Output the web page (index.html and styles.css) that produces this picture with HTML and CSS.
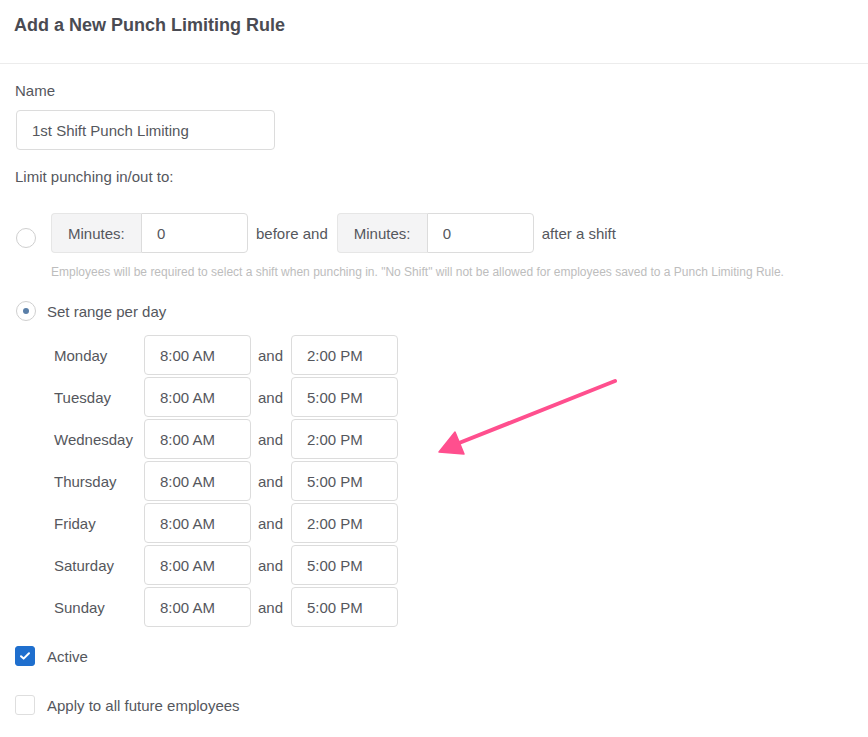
FILE: index.html
```html
<!DOCTYPE html>
<html lang="en">
<head>
    <meta charset="UTF-8">
    <meta name="viewport" content="width=device-width, initial-scale=1.0">
    <title>Add a New Punch Limiting Rule</title>
    <link rel="stylesheet" href="styles.css">
</head>
<body>

    <div class="header">
        <h1>Add a New Punch Limiting Rule</h1>
    </div>

    <div class="form">
        <div class="field-label">Name</div>
        <input type="text" class="name-input" value="1st Shift Punch Limiting" />

        <div class="field-label limit-label">Limit punching in/out to:</div>

        <div class="option-row">
            <span class="radio shift-radio"></span>
            <div class="addon-group">
                <span class="addon">Minutes:</span>
                <input type="text" class="addon-input" value="0" />
            </div>
            <span class="between">before and</span>
            <div class="addon-group">
                <span class="addon">Minutes:</span>
                <input type="text" class="addon-input" value="0" />
            </div>
            <span class="between">after a shift</span>
        </div>
        <div class="helper">Employees will be required to select a shift when punching in. "No Shift" will not be allowed for employees saved to a Punch Limiting Rule.</div>

        <div class="range-row">
            <span class="radio checked"></span>
            <span>Set range per day</span>
        </div>

        <div class="days">
            <div class="day-row">
                <span class="day-name">Monday</span>
                <input type="text" class="time-input" value="8:00 AM" />
                <span class="and">and</span>
                <input type="text" class="time-input" value="2:00 PM" />
            </div>
            <div class="day-row">
                <span class="day-name">Tuesday</span>
                <input type="text" class="time-input" value="8:00 AM" />
                <span class="and">and</span>
                <input type="text" class="time-input" value="5:00 PM" />
            </div>
            <div class="day-row">
                <span class="day-name">Wednesday</span>
                <input type="text" class="time-input" value="8:00 AM" />
                <span class="and">and</span>
                <input type="text" class="time-input" value="2:00 PM" />
            </div>
            <div class="day-row">
                <span class="day-name">Thursday</span>
                <input type="text" class="time-input" value="8:00 AM" />
                <span class="and">and</span>
                <input type="text" class="time-input" value="5:00 PM" />
            </div>
            <div class="day-row">
                <span class="day-name">Friday</span>
                <input type="text" class="time-input" value="8:00 AM" />
                <span class="and">and</span>
                <input type="text" class="time-input" value="2:00 PM" />
            </div>
            <div class="day-row">
                <span class="day-name">Saturday</span>
                <input type="text" class="time-input" value="8:00 AM" />
                <span class="and">and</span>
                <input type="text" class="time-input" value="5:00 PM" />
            </div>
            <div class="day-row">
                <span class="day-name">Sunday</span>
                <input type="text" class="time-input" value="8:00 AM" />
                <span class="and">and</span>
                <input type="text" class="time-input" value="5:00 PM" />
            </div>
        </div>

        <div class="check-row active-row">
            <span class="checkbox checked">
                <svg width="12" height="10" viewBox="0 0 12 10"><path d="M2 5.2 L4.6 7.6 L10 2.2" fill="none" stroke="#fff" stroke-width="2" stroke-linecap="round" stroke-linejoin="round"/></svg>
            </span>
            <span>Active</span>
        </div>
        <div class="check-row future-row">
            <span class="checkbox"></span>
            <span>Apply to all future employees</span>
        </div>
    </div>

    <!-- annotation arrow over the form -->
    <svg class="arrow" width="868" height="737" viewBox="0 0 868 737">
        <line x1="615" y1="381" x2="454" y2="445" stroke="#ff4f8e" stroke-width="4" stroke-linecap="round"/>
        <polygon points="439,452 455,432 464,454" fill="#ff4f8e" stroke="#ff4f8e" stroke-width="1.5" stroke-linejoin="round"/>
    </svg>

</body>
</html>
```

FILE: styles.css
```css
body {
    margin: 0;
    font-family: "Liberation Sans", Arial, sans-serif;
    font-size: 15px;
    color: #55575d;
    background-color: #fff;
    position: relative;
}

.header {
    height: 63px;
    border-bottom: 1px solid #ececec;
    padding: 0 14px;
}

h1 {
    margin: 0;
    padding-top: 13px;
    font-size: 18px;
    line-height: 24px;
    font-weight: bold;
    color: #4a4b53;
}

.form {
    padding: 0 15px;
}

.field-label {
    margin-top: 18px;
    line-height: 18px;
}

.limit-label {
    margin-top: 18px;
}

input {
    font-family: inherit;
    font-size: 15px;
    color: #55575d;
    box-sizing: border-box;
    border: 1px solid #dcdcdc;
    border-radius: 4px;
    outline: none;
    background: #fff;
}

.name-input {
    display: block;
    margin: 10px 0 0 1px;
    width: 259px;
    height: 40px;
    padding: 0 15px;
}

.option-row {
    display: flex;
    align-items: center;
    margin-top: 27px;
    height: 40px;
}

.radio {
    width: 20px;
    height: 20px;
    box-sizing: border-box;
    border: 1px solid #cfcfcf;
    border-radius: 50%;
    background: #fff;
    flex-shrink: 0;
    position: relative;
}

.shift-radio {
    margin: 10px 15px 0 1px;
}

.radio.checked::after {
    content: "";
    position: absolute;
    left: 6px;
    top: 6px;
    width: 6px;
    height: 6px;
    border-radius: 50%;
    background: #5a7fa8;
}

.addon-group {
    display: flex;
    height: 40px;
}

.addon {
    display: flex;
    align-items: center;
    width: 90px;
    box-sizing: border-box;
    padding-left: 16px;
    background: #f4f4f5;
    border: 1px solid #e6e6e6;
    border-right: none;
    border-radius: 4px 0 0 4px;
}

.addon-input {
    width: 107px;
    height: 40px;
    padding: 0 15px;
    border-radius: 0 4px 4px 0;
}

.between {
    margin: 0 9px 0 8px;
}

.helper {
    margin: 11px 0 0 36px;
    font-size: 12px;
    line-height: 16px;
    color: #bdbdbd;
    white-space: nowrap;
}

.range-row {
    display: flex;
    align-items: center;
    gap: 11px;
    margin-top: 21px;
    height: 20px;
    padding-left: 1px;
}

.days {
    margin: 14px 0 0 39px;
    display: flex;
    flex-direction: column;
    gap: 2px;
}

.day-row {
    display: flex;
    align-items: center;
    height: 40px;
}

.day-name {
    width: 90px;
}

.time-input {
    width: 107px;
    height: 40px;
    padding: 0 15px;
}

.and {
    width: 40px;
    box-sizing: border-box;
    padding-left: 7px;
}

.check-row {
    display: flex;
    align-items: center;
    gap: 12px;
    height: 20px;
}

.active-row {
    margin-top: 19px;
}

.future-row {
    margin-top: 29px;
}

.checkbox {
    width: 20px;
    height: 20px;
    box-sizing: border-box;
    border: 1px solid #dedede;
    border-radius: 3px;
    background: #fff;
    display: flex;
    align-items: center;
    justify-content: center;
}

.checkbox.checked {
    background: #1f6fce;
    border-color: #1f6fce;
}

.arrow {
    position: absolute;
    left: 0;
    top: 0;
    pointer-events: none;
}
```
